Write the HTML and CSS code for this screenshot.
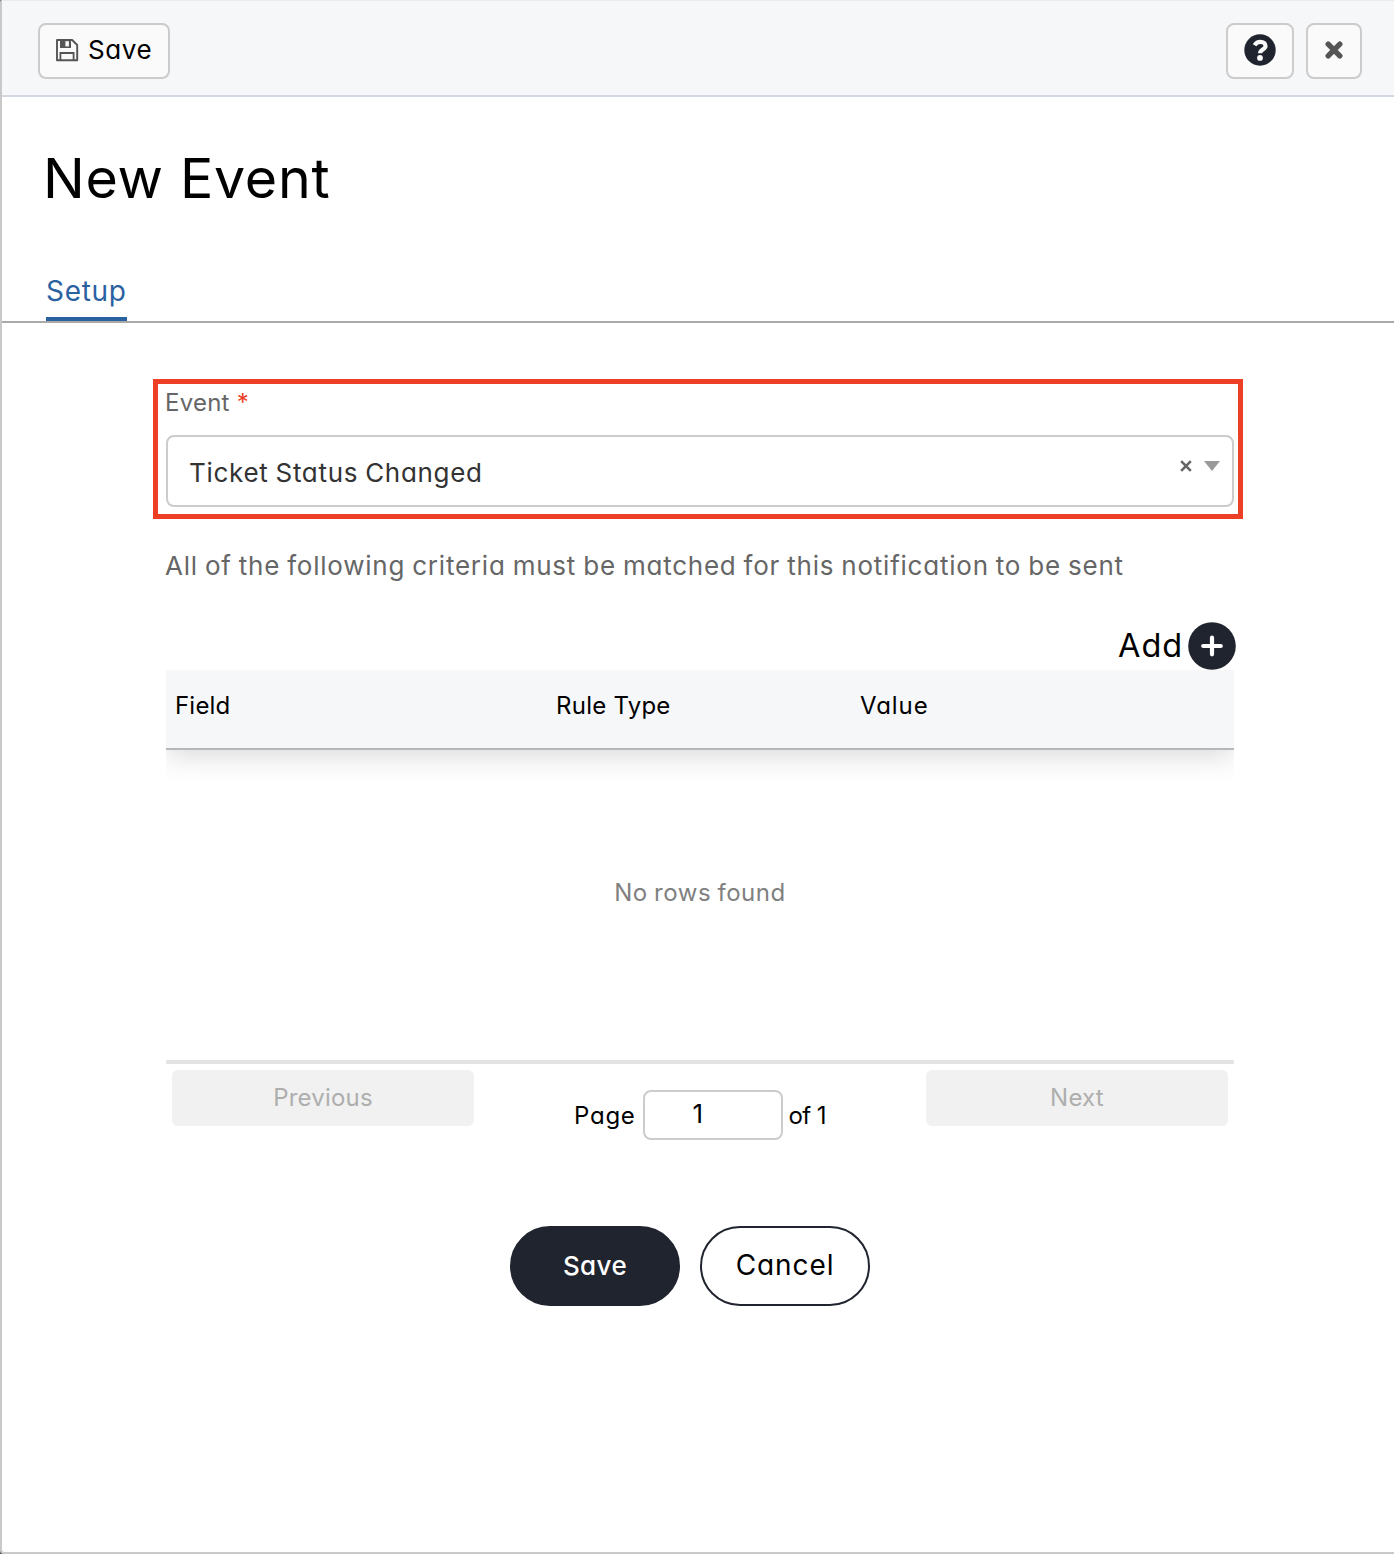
FILE: index.html
```html
<!DOCTYPE html>
<html lang="en">
<head>
<meta charset="utf-8">
<title>New Event</title>
<link rel="stylesheet" href="styles.css">
</head>
<body>
<div class="panel">
  <header class="toolbar">
    <button class="tool-btn tool-save" type="button">
      <svg viewBox="0 0 24 24" width="24" height="24"><path d="M2 2h15.2L22.2 7v15.2H2z" fill="none" stroke="#555" stroke-width="1.9" stroke-linejoin="round"/><path d="M5 2h11v8H5z" fill="#555"/><path d="M10.4 3.2h3.5v5.2h-3.5z" fill="#fafafa"/><path d="M5.4 22v-7h13.2v7" fill="none" stroke="#555" stroke-width="1.8"/></svg>
      <span>Save</span>
    </button>
    <div class="tool-group">
      <button class="tool-btn tool-help" type="button" aria-label="Help">
        <svg viewBox="0 0 32 32" width="32" height="32"><circle cx="16" cy="16" r="15.7" fill="#20242f"/><path d="M10.6 11.2C12 8.8 14 7.8 16.4 7.8c3 0 5.1 1.7 5.1 4.2 0 3.5-5.4 3.6-5.4 7.2" fill="none" stroke="#fafafa" stroke-width="4.2"/><circle cx="16" cy="23.9" r="2.9" fill="#fafafa"/></svg>
      </button>
      <button class="tool-btn tool-close" type="button" aria-label="Close">
        <svg viewBox="0 0 18 18" width="18" height="18"><path d="M3.2 3.2l11.6 11.6M14.8 3.2L3.2 14.8" stroke="#555" stroke-width="5.4" stroke-linecap="round"/></svg>
      </button>
    </div>
  </header>
  <h1 class="title">New Event</h1>
  <nav class="tabs"><a class="tab">Setup</a></nav>
  <main class="form">
    <section class="field">
      <label class="label">Event <span class="required">*</span></label>
      <div class="select">
        <span>Ticket Status Changed</span>
        <span class="select-icons">
          <svg viewBox="0 0 12 12" width="12" height="12"><path d="M1.2 1.2l9.6 9.6M10.8 1.2L1.2 10.8" stroke="#666" stroke-width="2.6"/></svg>
          <svg viewBox="0 0 16 10" width="16" height="10"><path d="M0 0h16L8 10z" fill="#999"/></svg>
        </span>
      </div>
    </section>
    <p class="hint">All of the following criteria must be matched for this notification to be sent</p>
    <div class="add">
      <span>Add</span>
      <svg viewBox="0 0 48 48" width="48" height="48"><circle cx="24" cy="24" r="23.8" fill="#20242f"/><path d="M24 15.7v16.6M15.2 24h17.6" stroke="#fff" stroke-width="4.2" stroke-linecap="round"/></svg>
    </div>
    <div class="table">
      <div class="thead"><span>Field</span><span class="col-rule">Rule Type</span><span class="col-value">Value</span></div>
      <div class="tbody">No rows found</div>
      <div class="pager">
        <button class="page-btn" type="button" disabled>Previous</button>
        <div class="page-info"><span class="page-label">Page</span><span class="page-input">1</span><span class="page-total">of 1</span></div>
        <button class="page-btn" type="button" disabled>Next</button>
      </div>
    </div>
    <div class="actions">
      <button class="pill pill-dark" type="button">Save</button>
      <button class="pill pill-light" type="button">Cancel</button>
    </div>
  </main>
</div>
</body>
</html>
```
FILE: styles.css
```css
* { box-sizing: border-box; }

body {
  margin: 0;
  background: #555;
  color: #000;
  font-family: Inter, "Open Sans", sans-serif;
  font-feature-settings: "cv11";
}

button {
  font: inherit;
  font-feature-settings: inherit;
  letter-spacing: inherit;
  color: inherit;
  padding: 0;
  margin: 0;
}

svg { display: block; flex: none; }
span { white-space: nowrap; }

.panel {
  height: 1554px;
  background: #fff;
  border-left: 2px solid #c9c9c9;
  border-bottom: 2px solid #c9c9c9;
  border-radius: 2px 0 0 4px;
  overflow: hidden;
}

.toolbar {
  height: 97px;
  padding: 22px 32px 0 36px;
  display: flex;
  align-items: flex-start;
  justify-content: space-between;
  background: #f6f7f9;
  border-top: 1px solid #e9ebf1;
  border-bottom: 2px solid #d1d8e0;
}

.tool-group { display: flex; gap: 12px; }

.tool-btn {
  height: 56px;
  display: flex;
  align-items: center;
  justify-content: center;
  background: #fafafa;
  border: 2px solid #ccc;
  border-radius: 8px;
}

.tool-save {
  width: 132px;
  gap: 9px;
  justify-content: flex-start;
  padding: 0 0 2px 15px;
  font-size: 26px;
  line-height: 52px;
  letter-spacing: 0.6px;
}

.tool-help { width: 68px; padding-bottom: 2px; }
.tool-close { width: 56px; padding-bottom: 2px; }

.title {
  margin: 0;
  padding: 39px 0 0 41px;
  font-size: 55.5px;
  line-height: 84px;
  font-weight: 400;
  letter-spacing: 0.7px;
}

.tabs {
  display: flex;
  height: 103px;
  padding-left: 44px;
  align-items: flex-end;
  border-bottom: 2px solid #a9a9a9;
}

.tab {
  height: 50px;
  width: 81px;
  line-height: 40px;
  font-size: 28px;
  letter-spacing: 0.7px;
  color: #2a61a1;
  border-bottom: 4px solid #2a61a1;
}

.form { width: 1090px; margin: 56px 0 0 151px; }

.field { height: 140px; border: 5px solid #ec3f25; padding: 0 4px 0 7px; }

.label { display: block; height: 51px; line-height: 38px; font-size: 24px; letter-spacing: 0.25px; color: #666; }
.required { color: #ec3f25; }

.select {
  height: 72px;
  margin-left: 1px;
  border: 2px solid #ccc;
  border-radius: 8px;
  display: flex;
  justify-content: space-between;
  padding: 0 12px 0 21px;
  font-size: 26px;
  line-height: 72px;
  letter-spacing: 0.7px;
  word-spacing: -1px;
  color: #333;
}

.select-icons { display: flex; gap: 12px; align-items: center; height: 58px; }

.hint {
  margin: 27px 0 0 12px;
  font-size: 26px;
  line-height: 40px;
  letter-spacing: 0.77px;
  word-spacing: -1px;
  white-space: nowrap;
  color: #666;
}

.add {
  display: flex;
  justify-content: flex-end;
  align-items: center;
  gap: 5px;
  margin: 36px 7px 0 0;
  font-size: 32.5px;
  line-height: 48px;
  letter-spacing: 0.9px;
}

.table { width: 1068px; margin-left: 13px; overflow: hidden; }

.thead {
  height: 80px;
  display: grid;
  grid-template-columns: 381px 304px 1fr;
  padding-left: 9px;
  font-size: 24px;
  line-height: 72px;
  letter-spacing: 0.2px;
  background: #f6f7f9;
  border-bottom: 2px solid #b7b7b7;
  box-shadow: 0 4px 30px rgba(0, 0, 0, 0.17);
}

.col-rule { letter-spacing: 0.25px; }
.col-value { letter-spacing: 0.9px; }

.tbody {
  height: 314px;
  padding-top: 124px;
  text-align: center;
  font-size: 24px;
  line-height: 38px;
  letter-spacing: 0.55px;
  word-spacing: -1px;
  color: #808080;
  border-bottom: 4px solid #e3e3e3;
}

.pager { display: flex; justify-content: space-between; padding: 6px 6px 0; font-size: 24px; }

.page-btn {
  width: 302px;
  height: 56px;
  border: 0;
  border-radius: 6px;
  background: #f1f1f1;
  color: #aeaeae;
  line-height: 54px;
  letter-spacing: 0.2px;
}

.page-info { display: flex; align-items: center; gap: 7px; margin-top: 20px; height: 50px; }
.page-label { letter-spacing: 0.7px; }
.page-total { letter-spacing: -0.6px; margin-left: -1px; }

.page-input {
  width: 140px;
  height: 50px;
  border: 2px solid #ccc;
  border-radius: 8px;
  padding-left: 48px;
  font-size: 26px;
  line-height: 44px;
}

.actions { display: flex; gap: 20px; margin: 86px 0 0 357px; }

.pill { width: 170px; height: 80px; border-radius: 40px; border: 2px solid #20242f; }
.pill-dark { background: #20242f; color: #fff; font-size: 26px; font-weight: 500; letter-spacing: 0.4px; line-height: 74px; }
.pill-light { background: #fff; font-size: 28px; letter-spacing: 0.9px; line-height: 72px; padding-bottom: 2px; }
```
